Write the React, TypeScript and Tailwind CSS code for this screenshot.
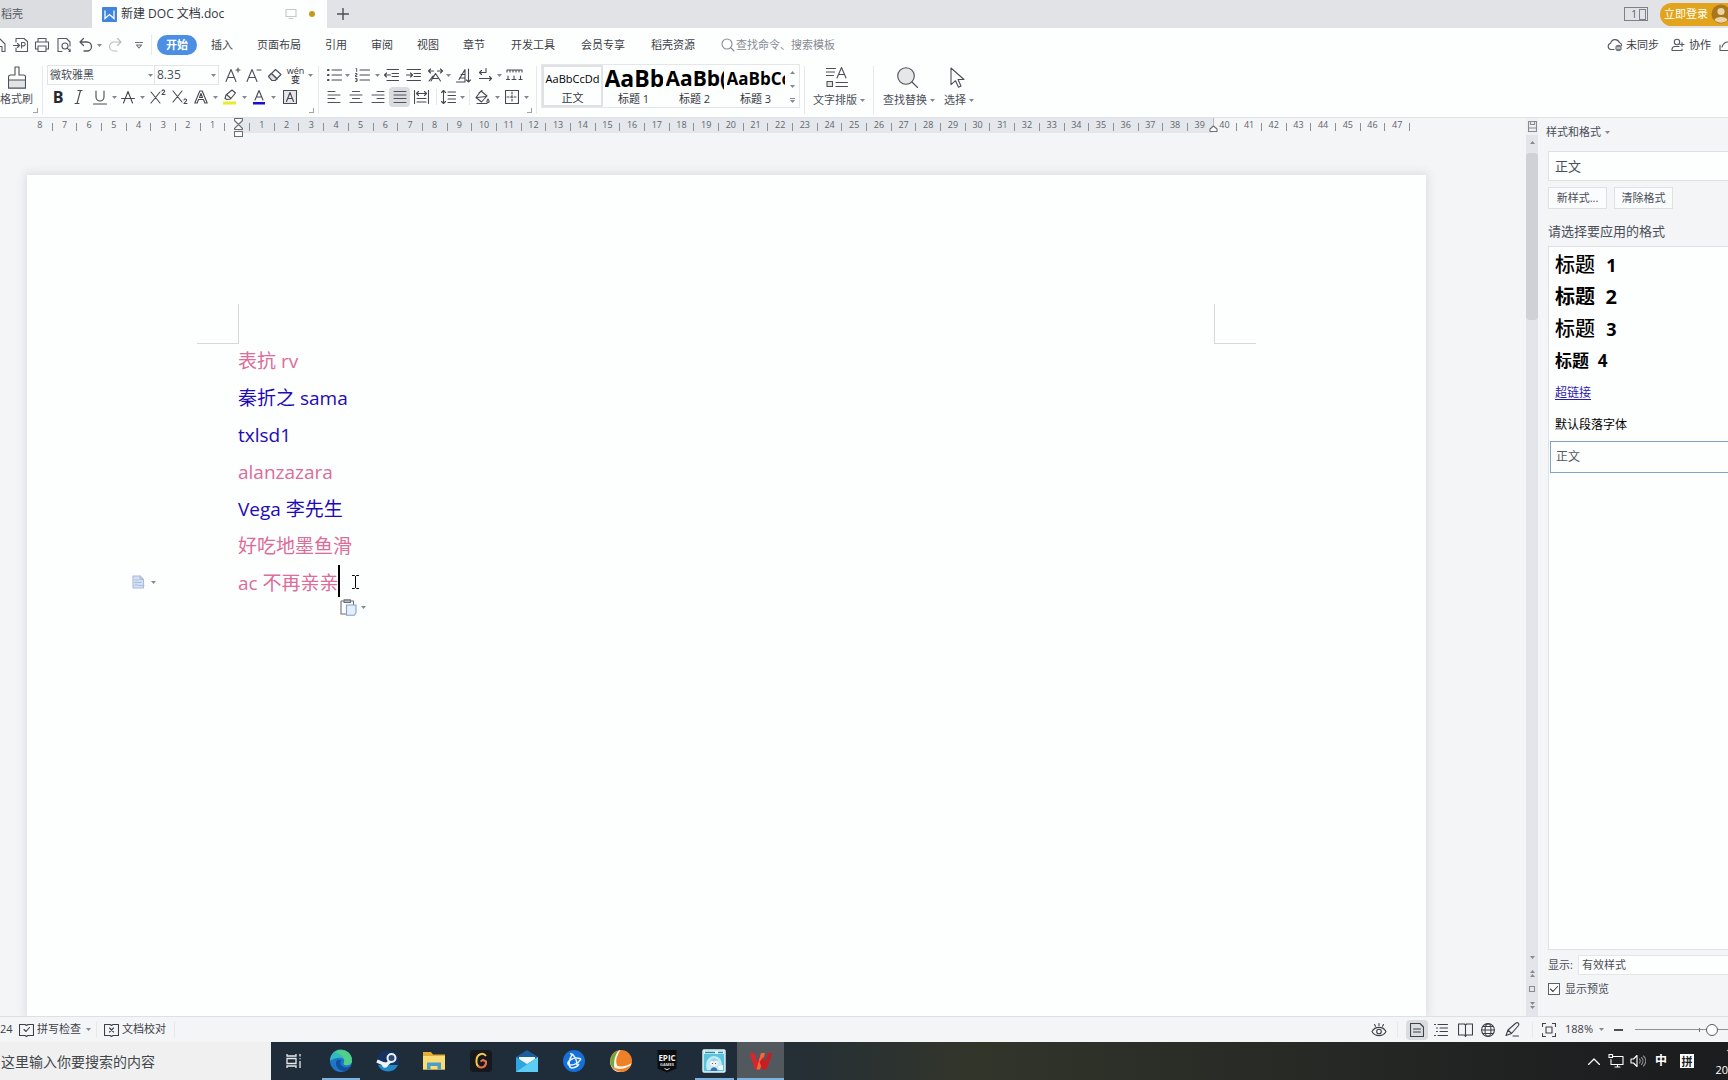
import type { ReactNode } from "react";

const lines = [
  { text: "表抗 rv", color: "text-[#dc6c98]" },
  { text: "秦折之 sama", color: "text-[#1f0bb4]" },
  { text: "txlsd1", color: "text-[#1f0bb4]" },
  { text: "alanzazara", color: "text-[#dc6c98]" },
  { text: "Vega 李先生", color: "text-[#1f0bb4]" },
  { text: "好吃地墨鱼滑", color: "text-[#dc6c98]" },
];

const mainTabs = ["插入", "页面布局", "引用", "审阅", "视图", "章节"];
const extraTabs = ["开发工具", "会员专享", "稻壳资源"];

const rulerMarks = Array.from({ length: 56 }, (_, i) => i - 8);

const gallery = [
  { name: "标题 1", sample: "AaBb", size: "text-[23px]" },
  { name: "标题 2", sample: "AaBb(", size: "text-[21px]" },
  { name: "标题 3", sample: "AaBbCc", size: "text-[17px]" },
];

function Svg({ w = 16, h = 16, className = "", children }: { w?: number; h?: number; className?: string; children: ReactNode }) {
  return (
    <svg
      width={w}
      height={h}
      viewBox={`0 0 ${w} ${h}`}
      className={`shrink-0 ${className}`}
      fill="none"
      stroke="currentColor"
      strokeWidth="1.1"
      strokeLinecap="round"
      strokeLinejoin="round"
      aria-hidden="true"
    >
      {children}
    </svg>
  );
}

function Caret({ up = false }: { up?: boolean }) {
  return (
    <svg width="5" height="3" viewBox="0 0 5 3" className="shrink-0 text-[#858890]" aria-hidden="true">
      <path d={up ? "M0 3L2.5 0L5 3z" : "M0 0h5L2.5 3z"} fill="currentColor" />
    </svg>
  );
}

function Tool({ label, w, children, active = false }: { label: string; w: string; children: ReactNode; active?: boolean }) {
  return (
    <button aria-label={label} className={`h-5 ${w} shrink-0 flex items-center justify-center ${active ? "bg-[#d9dde0] rounded-sm" : ""}`}>
      {children}
    </button>
  );
}

function DropCaret({ w = "w-2" }: { w?: string }) {
  return (
    <button aria-label="更多" className={`h-5 ${w} shrink-0 flex items-center justify-center`}>
      <Caret />
    </button>
  );
}

function Divider({ className = "h-10" }: { className?: string }) {
  return <div className={`w-px shrink-0 bg-[#e6e8ea] ${className}`} />;
}

function Corner() {
  return (
    <Svg w={5} h={5} className="absolute right-1 bottom-1 text-[#a0a3a8]">
      <path d="M4.500 0v4.500h-4.500" />
    </Svg>
  );
}

function TitleBar() {
  return (
    <header className="h-7 shrink-0 flex items-center bg-[#e1e3e6] text-[#33363d]">
      <button className="w-[92px] h-full shrink-0 bg-[#dbdde0] text-left text-[11px] text-[#555a64] pl-px">稻壳</button>
      <div className="w-[235px] h-full shrink-0 bg-[#fdfefe] flex items-center pl-[10px] pr-3">
        <svg width="15" height="15" viewBox="0 0 15 15" aria-hidden="true">
          <rect width="15" height="15" rx="1" fill="#3f84dd" />
          <path d="M3 3.500v8l4.500-4l4.500 4v-8" fill="none" stroke="#fff" strokeWidth="1.300" />
        </svg>
        <span className="text-[12px] ml-1 flex-1 whitespace-nowrap">新建 DOC 文档.doc</span>
        <Svg w={12} h={12} className="text-[#c4c8cc] mr-3">
          <path d="M1 1.500h10v7h-10zM4 10.500h4" />
        </Svg>
        <span className="size-[6px] rounded-full bg-[#c79a1c]" />
      </div>
      <button aria-label="新建标签" className="size-8 flex items-center justify-center">
        <Svg w={12} h={12} className="text-[#4b4e56]">
          <path d="M6 0.500v11M0.500 6h11" strokeWidth="1.400" />
        </Svg>
      </button>
      <div className="ml-auto flex items-center gap-3 shrink-0">
        <button aria-label="多窗口" className="h-[14px] w-6 border border-[#7d8188] flex items-center justify-end gap-[2px] pr-px text-[10px] leading-none text-[#555a64]">
          1<span className="w-[7px] h-[11px] border border-[#7d8188]" />
        </button>
        <button className="h-[23px] w-[68px] rounded-l-full bg-[#e2a41c] text-white text-[11px] flex items-center pl-1 gap-[3px] overflow-hidden whitespace-nowrap">
          立即登录
          <svg width="20" height="20" viewBox="0 0 20 20" className="shrink-0" aria-hidden="true">
            <circle cx="10" cy="10" r="9.500" fill="#a9761b" />
            <circle cx="10" cy="7.500" r="3.600" fill="#ead3a4" />
            <path d="M3.500 16c1-4 12-4 13 0c-3 3.500-10 3.500-13 0z" fill="#ead3a4" />
          </svg>
        </button>
      </div>
    </header>
  );
}

function MenuBar() {
  return (
    <nav className="h-[34px] shrink-0 flex items-center text-[11px] text-[#3c4048] whitespace-nowrap">
      <Tool label="主页" w="w-[10px]">
        <Svg w={10} className="text-[#555962]">
          <path d="M-5 7l5-5l5 5v7.500h-3v-5h-4" />
        </Svg>
      </Tool>
      <Tool label="输出为PDF" w="w-[22px]">
        <Svg className="text-[#555962]">
          <path d="M3 5v-3.500h8l3.500 3v10h-11.500v-3.500M0.500 8.500h6M4.500 6.500l2 2l-2 2M8.500 11v-5.500h2a1.600 1.600 0 0 1 0 3.400h-2" />
        </Svg>
      </Tool>
      <Tool label="打印" w="w-5">
        <Svg className="text-[#555962]">
          <path d="M4 5v-3.500h8v3.500M4 12h-2.500v-7h13v7h-2.500M4 9h8v5.500h-8z" />
        </Svg>
      </Tool>
      <Tool label="打印预览" w="w-6">
        <Svg className="text-[#555962]">
          <path d="M6 14.500h-4v-13h8.500l3.500 3.500v4M14 12v2.500h-1" />
          <circle cx="9" cy="9" r="3" />
          <path d="M11.200 11.200l3 3" />
        </Svg>
      </Tool>
      <Tool label="撤销" w="w-5">
        <Svg className="text-[#555962]">
          <path d="M5.500 1.500l-3.500 3.500l3.500 3.500M2 5h7a4.500 4.500 0 0 1 0 9h-3" strokeWidth="1.300" />
        </Svg>
      </Tool>
      <DropCaret w="w-[7px]" />
      <Tool label="恢复" w="w-6">
        <Svg className="text-[#b8bbc0]">
          <path d="M10.500 1.500l3.500 3.500l-3.500 3.500M14 5h-7a4.500 4.500 0 0 0 0 9h3" />
        </Svg>
      </Tool>
      <Tool label="自定义快速访问" w="w-6">
        <Svg w={8} h={7} className="text-[#6c7078]">
          <path d="M0.500 0.500h7M1.500 3l2.500 3l2.500-3z" />
        </Svg>
      </Tool>
      <Divider className="h-5 mr-[5px]" />
      <button className="h-5 w-10 rounded-full bg-[#4a8fe3] text-white font-bold shrink-0">开始</button>
      <div className="flex gap-6 ml-[14px]">
        {mainTabs.map((t) => (
          <button key={t}>{t}</button>
        ))}
      </div>
      <div className="flex gap-[26px] ml-[26px]">
        {extraTabs.map((t) => (
          <button key={t}>{t}</button>
        ))}
      </div>
      <label className="flex items-center ml-[26px] text-[#878b94]">
        <Svg w={14} h={14}>
          <circle cx="6" cy="6" r="5" />
          <path d="M9.500 9.500l3.500 3.500" />
        </Svg>
        <input placeholder="查找命令、搜索模板" className="w-40 ml-px outline-none placeholder:text-[#878b94]" />
      </label>
      <div className="ml-auto flex items-center shrink-0">
        <button className="flex items-center gap-[3px]">
          <Svg className="text-[#555962]">
            <path d="M7 12.500h-3a3.200 3.200 0 0 1-0.300-6.300a4.500 4.500 0 0 1 8.600-0.700a3.300 3.300 0 0 1 2.400 3" />
            <circle cx="11.500" cy="11" r="3.200" fill="#777b84" stroke="none" />
            <path d="M10 11h3" stroke="#fff" />
          </Svg>
          未同步
        </button>
        <button className="flex items-center gap-1 ml-3">
          <Svg w={14} h={14} className="text-[#555962]">
            <circle cx="6" cy="4" r="2.700" />
            <path d="M8 8.500h-4a3 3 0 0 0-3 3v1h10v-1.500M11 4.500v4M9 6.500h4" />
          </Svg>
          协作
        </button>
        <button aria-label="分享" className="ml-2">
          <Svg w={9} h={14} className="text-[#555962]">
            <path d="M1 7v5.500h8M3 9c1-3 3-5 6-5" />
          </Svg>
        </button>
      </div>
    </nav>
  );
}

function AlignLines({ d }: { d: string }) {
  return (
    <Svg w={14} h={14} className="text-[#50545c]">
      <path d={d} />
    </Svg>
  );
}

function FontGroup() {
  return (
    <div className="relative w-[275px] shrink-0 h-full pl-1 pt-[3px]">
      <div className="flex items-center">
        <div className="flex w-[172px] h-[20px] border border-[#e2e4e6] text-[11px] items-center mr-[3px]">
          <input aria-label="字体" defaultValue="微软雅黑" className="w-[98px] pl-[2px] outline-none" />
          <DropCaret />
          <div className="w-px h-full bg-[#e2e4e6]" />
          <input aria-label="字号" defaultValue="8.35" className="w-[54px] pl-[2px] outline-none text-[12px]" />
          <DropCaret />
        </div>
        <Tool label="增大字号" w="w-[21px]">
          <Svg>
            <path d="M1 14.500l5-12l5 12M2.700 10.500h6.600M13 1v4M11 3h4" />
          </Svg>
        </Tool>
        <Tool label="减小字号" w="w-[21px]">
          <Svg>
            <path d="M1 14.500l5-12l5 12M2.700 10.500h6.600M11 3h4" />
          </Svg>
        </Tool>
        <Tool label="清除格式" w="w-[21px]">
          <Svg>
            <path d="M1.500 9.500l7-7l5.500 5l-6 6h-3zM4.500 6.500l5.500 5.500" />
            <path d="M1.500 9.500l3-3l5.500 5.500l-2 1.500h-3z" fill="#dcdee0" />
          </Svg>
        </Tool>
        <Tool label="拼音指南" w="w-[21px]">
          <span className="flex flex-col items-center text-[9px] leading-[9px] font-medium text-[#33363d]">
            <span>wén</span>
            <span>变</span>
          </span>
        </Tool>
        <DropCaret />
      </div>
      <div className="flex items-center mt-[2px] text-[#454951]">
        <Tool label="加粗" w="w-[22px]">
          <b className="text-[16px] text-[#26292f]">B</b>
        </Tool>
        <Tool label="倾斜" w="w-5">
          <Svg w={10} h={14}>
            <path d="M4 0.500h4M1 13.500h4M6.500 0.500l-3.500 13" />
          </Svg>
        </Tool>
        <Tool label="下划线" w="w-[22px]">
          <Svg w={14} h={15}>
            <path d="M3 1v6a4 4 0 0 0 8 0v-6M0.500 14h13" />
          </Svg>
        </Tool>
        <DropCaret w="w-[6px]" />
        <Tool label="删除线" w="w-[22px]">
          <Svg w={14} h={15}>
            <path d="M2.500 13l4.500-11.500l4.500 11.500M0.500 8.500h13" />
          </Svg>
        </Tool>
        <DropCaret w="w-[6px]" />
        <Tool label="上标" w="w-[26px]">
          <Svg>
            <path d="M1 3l9 11M10 3l-9 11M12 2a1.300 1.300 0 0 1 2.600 0.500l-2.600 3h3" />
          </Svg>
        </Tool>
        <Tool label="下标" w="w-[18px]">
          <Svg>
            <path d="M1 2l9 11M10 2l-9 11M12 11a1.300 1.300 0 0 1 2.600 0.500l-2.600 3h3" />
          </Svg>
        </Tool>
        <Tool label="文字效果" w="w-6">
          <Svg w={14} h={14}>
            <path d="M0.800 13l5-12h2.400l5 12h-2.400l-1.300-3.500h-5l-1.300 3.500zM5.500 7.500l1.500-4l1.500 4z" />
          </Svg>
        </Tool>
        <DropCaret w="w-[5px]" />
        <Tool label="突出显示" w="w-6">
          <Svg>
            <path d="M3 9.500l1-3.500l6-5l3.500 3l-5 6l-3.500 0.500zM5 6l4 3.500" />
            <rect x="1" y="12.500" width="13" height="3" fill="#e9ec2c" stroke="none" />
          </Svg>
        </Tool>
        <DropCaret w="w-[5px]" />
        <Tool label="字体颜色" w="w-6">
          <Svg w={14}>
            <path d="M3 11l4-9.500l4 9.500M4.200 8h5.600" />
            <rect x="1" y="13" width="12" height="2.500" fill="#1f0bd0" stroke="none" />
          </Svg>
        </Tool>
        <DropCaret w="w-[5px]" />
        <Tool label="字符底纹" w="w-7">
          <Svg w={14} h={14}>
            <path d="M0.500 0.500h13v13h-13z" fill="#e6e7e8" />
            <path d="M3.500 11.500l3.500-9l3.500 9M4.700 8.500h4.600" />
          </Svg>
        </Tool>
      </div>
      <Corner />
    </div>
  );
}

function ParagraphGroup() {
  return (
    <div className="relative w-[217px] shrink-0 h-full pl-1 pt-[3px] text-[#454951]">
      <div className="flex items-center">
        <Tool label="项目符号" w="w-[22px]">
          <Svg w={15} h={14}>
            <path d="M5 2h9.500M5 7h9.500M5 12h9.500" />
            <path d="M1 2h0.500M1 7h0.500M1 12h0.500" strokeWidth="2.200" />
          </Svg>
        </Tool>
        <DropCaret w="w-[5px]" />
        <Tool label="编号" w="w-6">
          <Svg w={15} h={14}>
            <path d="M5 2h9.500M5 7h9.500M5 12h9.500" />
            <path d="M1 0.500h0.700v3M0.500 5.500h1.500v1.500h-1.500v1.500h1.500M0.500 10.500h1.500v3h-1.500M1 12h1" strokeWidth="0.900" />
          </Svg>
        </Tool>
        <DropCaret w="w-[6px]" />
        <Tool label="减少缩进" w="w-[22px]">
          <Svg w={15} h={14}>
            <path d="M3 1.500h11.500M8 5.500h6.500M8 8.500h6.500M3 12.500h11.500M0.500 7h6M2.500 5l-2 2l2 2" />
          </Svg>
        </Tool>
        <Tool label="增加缩进" w="w-[22px]">
          <Svg w={15} h={14}>
            <path d="M1 1.500h13.500M8 5.500h6.500M8 8.500h6.500M1 12.500h13.500M0.500 7h6M4.500 5l2 2l-2 2" />
          </Svg>
        </Tool>
        <Tool label="中文版式" w="w-[22px]">
          <Svg w={15} h={14}>
            <path d="M1 13l4-5M0.500 3h5M2.500 1l-2 2l2 2M14.500 3h-5M12.500 1l2 2l-2 2M3 13l4.500-7.500l5 7.500M5 10.500h5" />
          </Svg>
        </Tool>
        <DropCaret w="w-[5px]" />
        <Tool label="排序" w="w-6">
          <Svg w={15} h={15}>
            <path d="M0.500 14h8.500v-12.500l-6 10M5 6.500h4M3.500 10h5.500M12.500 1v13M10.500 12l2 2l2-2" />
          </Svg>
        </Tool>
        <Tool label="显示段落标记" w="w-[22px]">
          <Svg w={14} h={14}>
            <path d="M7 0.500v4h-6.500M2.500 2.500l-2 2l2 2M0.500 10.500h12M10.500 8.500l2 2l-2 2" />
          </Svg>
        </Tool>
        <DropCaret w="w-[5px]" />
        <Tool label="制表位" w="w-6">
          <Svg w={17} h={12}>
            <path d="M1 3v-2h15v2M4 1v2M7 1v2M10 1v2M13 1v2M0.500 10.500h3M6 10.500h4M13 10.500h3M2 7v3.500M8 7v3.500M14.500 7v3.500" />
          </Svg>
        </Tool>
      </div>
      <div className="flex items-center mt-[2px]">
        <Tool label="左对齐" w="w-[22px]">
          <AlignLines d="M1 1.500h7M1 5h12M1 8.500h7M1 12.500h12" />
        </Tool>
        <Tool label="居中" w="w-[22px]">
          <AlignLines d="M3.500 1.500h7M1 5h12M3.500 8.500h7M1 12.500h12" />
        </Tool>
        <Tool label="右对齐" w="w-[22px]">
          <AlignLines d="M6 1.500h7M1 5h12M6 8.500h7M1 12.500h12" />
        </Tool>
        <Tool label="两端对齐" w="w-[21px]" active>
          <AlignLines d="M1 1.500h12M1 5h12M1 8.500h12M1 12.500h12" />
        </Tool>
        <Tool label="分散对齐" w="w-[22px]">
          <Svg w={15} h={14}>
            <path d="M0.500 0.500v13M14.500 0.500v13M3 3.500h9M4.500 1.500l-2 2l2 2M10.500 1.500l2 2l-2 2M3 8.500h9M3 12h9" />
          </Svg>
        </Tool>
        <Divider className="h-4 ml-1" />
        <Tool label="行距" w="w-[22px]">
          <Svg w={15} h={14}>
            <path d="M2.500 0.500v13M0.500 2.500l2-2l2 2M0.500 11.500l2 2l2-2M7 2h7.500M7 5.500h7.500M7 9h7.500M7 12.500h7.500" />
          </Svg>
        </Tool>
        <DropCaret w="w-[6px]" />
        <Divider className="h-4 ml-1" />
        <Tool label="底纹" w="w-6">
          <Svg w={15} h={14}>
            <path d="M6 1l6 5l-5.500 6l-5.500-4.500zM4 3l3-2.500M2 7.500l9-1" />
            <path d="M13 9c1.500 2 1.500 3.500 0 3.500s-1.500-1.500 0-3.500M2 13.500h10" />
          </Svg>
        </Tool>
        <DropCaret w="w-[6px]" />
        <Tool label="边框" w="w-6">
          <Svg w={14} h={14}>
            <path d="M0.500 0.500h13v13h-13z" />
            <path d="M7 2v10M2 7h10" strokeDasharray="2 1.500" />
          </Svg>
        </Tool>
        <DropCaret w="w-[5px]" />
      </div>
      <Corner />
    </div>
  );
}

function StyleGallery() {
  return (
    <div className="flex shrink-0 w-[259px] h-11 mt-[2px] ml-1 border border-[#e4e6e8] text-[11px] text-[#33363d]">
      <button className="w-[61px] h-full border-2 border-[#dfe1e4] flex flex-col items-center justify-between pt-[3px] overflow-hidden">
        <span className="h-[18px] leading-[18px] text-black">AaBbCcDd</span>
        <span className="leading-[15px]">正文</span>
      </button>
      {gallery.map((g) => (
        <button key={g.name} className="w-[61px] h-full flex flex-col items-center justify-between pt-px pb-[2px] whitespace-nowrap">
          <span className={`w-[58px] h-[25px] leading-[25px] overflow-hidden text-left font-bold text-black ${g.size}`}>{g.sample}</span>
          <span className="leading-[13px]">{g.name}</span>
        </button>
      ))}
      <div className="flex flex-col flex-1">
        <button aria-label="上一行" className="flex-1 flex items-center justify-center">
          <Caret up />
        </button>
        <button aria-label="下一行" className="flex-1 flex items-center justify-center">
          <Caret />
        </button>
        <button aria-label="更多样式" className="flex-1 flex flex-col gap-px items-center justify-center">
          <span className="w-[5px] h-px bg-[#858890]" />
          <Caret />
        </button>
      </div>
    </div>
  );
}

function BigTool({ label, w, children }: { label: string; w: string; children: ReactNode }) {
  return (
    <button className={`${w} shrink-0 h-[46px] pt-[5px] flex flex-col items-center justify-between text-[11px] leading-[16px] whitespace-nowrap`}>
      <span className="pr-1">{children}</span>
      <span className="flex items-center gap-[3px]">
        {label}
        <Caret />
      </span>
    </button>
  );
}

function Ribbon() {
  return (
    <div className="h-14 shrink-0 flex border-b border-[#e0e3e6] text-[#4b4f58]">
      <div className="relative w-[42px] shrink-0 pt-1">
        <button className="w-[33px] flex flex-col items-end text-[11px] leading-[16px] whitespace-nowrap">
          <Svg w={18} h={23} className="mr-[7px] mb-[2px]">
            <path d="M7 1h4v8h4.500a2 2 0 0 1 2 2v11h-17v-11a2 2 0 0 1 2-2h4.500z" />
            <path d="M0.500 14h17v8h-17z" fill="#e2e3e5" />
          </Svg>
          格式刷
        </button>
        <Corner />
      </div>
      <Divider className="h-12 mt-1" />
      <FontGroup />
      <Divider className="h-12 mt-1" />
      <ParagraphGroup />
      <Divider className="h-12 mt-1" />
      <StyleGallery />
      <Divider className="h-12 mt-1 ml-1" />
      <BigTool label="文字排版" w="w-[68px]">
        <Svg w={22} h={21}>
          <path d="M0.500 1.500h9M0.500 5h8M0.500 8.500h7M11 11l4.500-10.500l4.500 10.500M12.500 7.500h6M10 15.500h11.500M10 19.500h11.500" />
          <path d="M1 14.500h5.500v5h-5.500z" fill="#e2e3e5" />
        </Svg>
      </BigTool>
      <Divider className="h-12 mt-1" />
      <BigTool label="查找替换" w="w-[70px]">
        <Svg w={21} h={21}>
          <circle cx="9" cy="9" r="8.300" fill="#e6e7e9" />
          <path d="M15 15l5.500 5.500" />
        </Svg>
      </BigTool>
      <BigTool label="选择" w="w-[30px]">
        <Svg w={15} h={21}>
          <path d="M1 1l13 11.500h-6l3 6.500l-2.500 1.200l-3-6.500l-4.500 4z" />
        </Svg>
      </BigTool>
    </div>
  );
}

function Ruler() {
  return (
    <div className="relative h-4 shrink-0 pl-7 text-[9px] leading-[13px] text-[#60646c]">
      <div className="grid w-[1382px] h-[15px] grid-cols-[repeat(56,minmax(0,1fr))]">
        {rulerMarks.map((n) => (
          <span
            key={n}
            className={`flex items-start justify-center ${n > 0 && n < 40 ? "bg-[#e4e7eb]" : ""} ${n === 0 ? "bg-linear-to-r from-transparent from-50% to-[#e4e7eb] to-50%" : ""}`}
          >
            <span className="flex-1 text-center">{n === 0 ? "" : Math.abs(n)}</span>
            <span className={`w-px h-2 mt-[5px] ${n === 39 ? "" : "bg-[#8d9097]"}`} />
          </span>
        ))}
      </div>
      <Svg w={9} h={19} className="absolute left-[234px] top-0 text-[#6a6d74]">
        <path d="M0.500 0.500h8v2l-4 4l-4-4zM4.500 6.500l4 4v1h-8v-1zM0.500 13.500h8v5h-8z" fill="#fff" />
      </Svg>
      <Svg w={9} h={14} className="absolute left-[1209px] top-0 text-[#6a6d74]">
        <path d="M4.500 0v8" stroke="#b9bcc2" />
        <path d="M4.500 8l3.500 3v2.500h-7v-2.500z" fill="#fff" />
      </Svg>
    </div>
  );
}

function DocPage() {
  return (
    <div className="ml-[27px] mt-[41px] w-[1399px] flex-1 bg-[#fdfefe] shadow-[0_0_9px_2px_#dcdee2] pt-[129px]">
      <div className="flex justify-between px-[170px]">
        <div className="w-[42px] h-10 border-r border-b border-[#d6d9dc]" />
        <div className="w-[42px] h-10 border-l border-b border-[#d6d9dc]" />
      </div>
      <div className="-mt-px pl-[211px] text-[19px] leading-[37px]">
        {lines.map((l) => (
          <p key={l.text} className={l.color}>
            {l.text}
          </p>
        ))}
        <p className="relative w-fit text-[#dc6c98]">
          ac 不再亲亲
          <span className="absolute -right-px top-0 w-[2px] h-8 bg-black" />
          <Svg w={7} h={14} className="absolute -right-5 top-[10px] text-black">
            <path d="M0.500 0.500h2l1 1l1-1h2M3.500 1.500v11M0.500 13.500h2l1-1l1 1h2" strokeWidth="1" />
          </Svg>
          <button aria-label="粘贴选项" className="absolute left-[102px] top-[34px] flex items-center gap-1 w-8">
            <Svg w={17} h={17} className="text-[#6d7078]">
              <path d="M6 15h-5v-13h12.500v4M4 0.800h6.500v2.700h-6.500z" fill="#fff" />
              <path d="M6.500 6h9.500v8l-2 2.300h-7.500z" fill="#e4effb" stroke="#7fa2cb" />
            </Svg>
            <Caret />
          </button>
          <button aria-label="页面选项" className="absolute -left-[106px] top-[10px] flex items-center gap-[6px]">
            <Svg w={13} h={14} className="text-[#a9bddb]">
              <path d="M1 1h7l3.500 3.500v8.500h-10.500z" fill="#d3e0f3" />
              <path d="M8 1v3.500h3.500M3 5h3M3 7.500h6M3 10h3M7 10.500h5" />
            </Svg>
            <Caret />
          </button>
        </p>
      </div>
    </div>
  );
}

function ScrollBar() {
  return (
    <div className="w-3 shrink-0 bg-[#e4e5ea] flex flex-col items-center text-[#868a92]">
      <button aria-label="标尺" className="h-[17px] w-full bg-[#eef0f2] flex justify-center items-center">
        <Svg w={9} h={11}>
          <path d="M0.500 0.500h8v10h-8zM0.500 7h8M2.500 0.500v3h4v-3" />
        </Svg>
      </button>
      <button aria-label="向上滚动" className="h-[14px] flex items-center">
        <Caret up />
      </button>
      <div className="w-full h-[167px] mt-1 bg-[#cfd1d7] rounded-sm" />
      <button aria-label="向下滚动" className="mt-auto h-4 flex items-center">
        <Caret />
      </button>
      <button aria-label="上一页" className="h-4 flex flex-col justify-center gap-px">
        <Caret up />
        <Caret up />
      </button>
      <button aria-label="选择浏览对象" className="size-[6px] my-[5px] border border-[#868a92]" />
      <button aria-label="下一页" className="h-4 mb-[3px] flex flex-col justify-center gap-px">
        <Caret />
        <Caret />
      </button>
    </div>
  );
}

function StylePanel() {
  return (
    <aside className="w-[190px] shrink-0 pl-[10px] flex flex-col bg-[#f4f5f7] text-[11px] text-[#4a4e57] whitespace-nowrap overflow-hidden">
      <button className="h-7 shrink-0 flex items-center gap-1 -ml-[2px]">
        样式和格式
        <Caret />
      </button>
      <input aria-label="当前样式" defaultValue="正文" className="mt-[5px] h-[30px] shrink-0 border border-r-0 border-[#dfe2e5] bg-[#fdfefe] pl-[6px] pb-[2px] text-[13px] outline-none" />
      <div className="flex gap-[7px] mt-[6px] shrink-0">
        <button className="w-[59px] h-[22px] border border-[#dfe2e5] bg-[#fbfcfd]">新样式...</button>
        <button className="w-[59px] h-[22px] border border-[#dfe2e5] bg-[#fbfcfd]">清除格式</button>
      </div>
      <h2 className="text-[13px] leading-5 mt-[12px] shrink-0">请选择要应用的格式</h2>
      <div className="mt-[5px] flex-1 border border-r-0 border-[#dfe2e5] bg-[#fdfefe] flex flex-col items-stretch text-black text-left">
        <button className="h-8 mt-[2px] pl-[6px] text-left text-[20px] font-medium">
          标题 <b className="ml-[6px] text-[18px]">1</b>
        </button>
        <button className="h-8 pl-[6px] text-left text-[20px] font-bold">标题&nbsp; 2</button>
        <button className="h-8 pl-[6px] text-left text-[20px] font-medium">
          标题 <b className="ml-[6px] text-[18px]">3</b>
        </button>
        <button className="h-8 pl-[6px] text-left text-[17px] font-bold">标题&nbsp; 4</button>
        <a href="#" className="h-8 pl-[6px] text-[12px] leading-8 text-[#2a1bb0] underline underline-offset-2">
          超链接
        </a>
        <button className="h-8 pl-[6px] text-left text-[12px]">默认段落字体</button>
        <button className="h-8 ml-px pl-[5px] text-left text-[12px] text-[#55585e] border border-r-0 border-[#83a2c4]">正文</button>
      </div>
      <label className="mt-[5px] h-5 shrink-0 flex items-center">
        显示:
        <select className="appearance-none ml-auto w-[150px] h-5 pl-[3px] border border-r-0 border-[#e4e7e9] bg-[#fdfefe]">
          <option>有效样式</option>
        </select>
      </label>
      <label className="mt-1 mb-[17px] h-5 shrink-0 flex items-center gap-[5px]">
        <span className="relative flex">
          <input type="checkbox" defaultChecked className="appearance-none size-3 border border-[#5a5e66] bg-white" />
          <Svg w={12} h={12} className="absolute inset-0 pointer-events-none text-[#3c4048]">
            <path d="M2.500 6l2.500 2.500l4.500-5" />
          </Svg>
        </span>
        显示预览
      </label>
    </aside>
  );
}

function StatusBar() {
  return (
    <footer className="h-[26px] shrink-0 flex items-center border-t border-[#dee0e4] bg-[#f4f5f7] text-[11px] text-[#3c4048] whitespace-nowrap">
      <span className="w-[19px] text-[11px]">24</span>
      <button className="flex items-center gap-[3px]">
        <Svg w={15} h={14}>
          <path d="M0.500 1.500h5.500l1.500 1l1.500-1h5.500v11h-5.500l-1.500 1l-1.500-1h-5.500zM5 6.500l2 2l3.500-4" />
        </Svg>
        拼写检查
      </button>
      <DropCaret w="w-[15px]" />
      <Divider className="h-4 mr-[7px]" />
      <button className="flex items-center gap-[3px] mr-2">
        <Svg w={15} h={14}>
          <path d="M0.500 1.500h5.500l1.500 1l1.500-1h5.500v11h-5.500l-1.500 1l-1.500-1h-5.500zM5.500 5l4 4M9.500 5l-4 4" />
        </Svg>
        文档校对
      </button>
      <Divider className="h-4" />
      <div className="ml-auto flex items-center shrink-0">
        <Tool label="护眼模式" w="w-9">
          <Svg>
            <path d="M1 9.500c3-5.500 11-5.500 14 0c-3 5.500-11 5.500-14 0zM8 1.500v2M3.500 2.500l1 1.800M12.500 2.500l-1 1.800" />
            <circle cx="8" cy="9.500" r="2.300" />
          </Svg>
        </Tool>
        <Divider className="h-4 mr-2" />
        <Tool label="页面视图" w="w-[22px]" active>
          <Svg w={14} h={14}>
            <path d="M0.500 0.500h9.500l3.500 3.500v9.500h-13zM3.500 6h7M3.500 9h7" />
          </Svg>
        </Tool>
        <Tool label="大纲" w="w-[26px]">
          <Svg w={14} h={14}>
            <path d="M0.500 1.500h1M4 1.500h9.500M2.500 5h1M6 5h7.500M2.500 8.500h1M6 8.500h7.500M0.500 12.500h1M4 12.500h9.500" />
          </Svg>
        </Tool>
        <Tool label="阅读版式" w="w-[22px]">
          <Svg w={15} h={14}>
            <path d="M0.500 1h6l1 1l1-1h6v11h-6l-1 1.500l-1-1.500h-6zM7.500 2v11" />
          </Svg>
        </Tool>
        <Tool label="Web版式" w="w-6">
          <Svg w={14} h={14}>
            <circle cx="7" cy="7" r="6.400" />
            <path d="M0.600 7h12.800M2 3.500h10M2 10.500h10" />
            <ellipse cx="7" cy="7" rx="3" ry="6.400" />
          </Svg>
        </Tool>
        <Tool label="写作模式" w="w-6">
          <Svg w={15} h={15}>
            <path d="M1 13.500l2-5.500l8-7c2-1 3.500 0.500 2.500 2.500l-7 8zM3 8l3.500 3.500M8 14h5.500" />
          </Svg>
        </Tool>
        <Divider className="h-4 ml-2" />
        <Tool label="适合页面" w="w-8">
          <Svg w={14} h={14}>
            <path d="M0.500 3.500v-3h3M10.500 0.500h3v3M13.500 10.500v3h-3M3.500 13.500h-3v-3M4 4h6v6h-6z" />
          </Svg>
        </Tool>
        <span>188%</span>
        <DropCaret w="w-4" />
        <Tool label="缩小" w="w-[18px]">
          <span className="w-[9px] h-[2px] bg-[#4b4e55]" />
        </Tool>
        <div className="relative w-[93px] ml-2 h-5 flex items-center">
          <span className="absolute left-16 w-px h-1 bg-[#70747c]" />
          <input
            type="range"
            aria-label="显示比例"
            defaultValue="88"
            className="appearance-none w-full h-px bg-[#8c9098] [&::-webkit-slider-thumb]:appearance-none [&::-webkit-slider-thumb]:size-3 [&::-webkit-slider-thumb]:rounded-full [&::-webkit-slider-thumb]:border [&::-webkit-slider-thumb]:border-[#555962] [&::-webkit-slider-thumb]:bg-white"
          />
        </div>
      </div>
    </footer>
  );
}

function AppIcon({ children }: { children: ReactNode }) {
  return (
    <svg width="24" height="24" viewBox="0 0 24 24" fill="none" aria-hidden="true">
      {children}
    </svg>
  );
}

const apps: { name: string; bar?: string; bg?: string; icon: ReactNode }[] = [
  {
    name: "任务视图",
    icon: (
      <path d="M5 5v2h9v-2M5 19v-2h9v2M5 9.500h9v5h-9zM18 5v2.500M18 12v7M18 9.200v1" stroke="#e8eaec" strokeWidth="1.300" />
    ),
  },
  {
    name: "Edge",
    bar: "w-[38px]",
    icon: (
      <>
        <circle cx="12" cy="12" r="11" fill="#1d77c9" />
        <path d="M1 12a11 11 0 0 1 22-1c0.200 4-3 5.500-6 5.300c-2.500-0.100-2.800-1.500-2-2.500c1.500-2.500-0.500-5-4-5c-4 0-8 1.500-10 3.200z" fill="#35b8c0" />
        <path d="M12 1a11 11 0 0 1 11 10c0.200 4-3 5.500-6 5.300c-2.500-0.100-2.800-1.500-2-2.500c2-6-4-9-9-10.800a10.500 10.500 0 0 1 6-2z" fill="#5cdb6c" opacity="0.700" />
        <path d="M8 11c-3 5 1 11 8 11.200c3-1 5-3 6-5.200c-5 3-10 1-10.500-2.500c-0.300-1.500 0.500-2.500 1-3.500z" fill="#124f9c" />
      </>
    ),
  },
  {
    name: "Steam",
    icon: (
      <>
        <circle cx="12" cy="12" r="11" fill="#16335f" />
        <path d="M2 16a11 11 0 0 0 20 0z" fill="#2389c4" />
        <path d="M1 12l9 4l5.500-5" stroke="#eef3f8" strokeWidth="3.500" />
        <circle cx="15.500" cy="9" r="4" fill="#2d4c74" stroke="#eef3f8" strokeWidth="2" />
        <circle cx="9" cy="16" r="2.800" fill="#eef3f8" />
      </>
    ),
  },
  {
    name: "文件资源管理器",
    icon: (
      <>
        <path d="M1 3h8l2 2.500h12v15h-22z" fill="#e5ae33" />
        <path d="M1 7h22v13.500h-22z" fill="#fbdb76" />
        <path d="M5 20.500v-7h14v7h-3.500v-3.500h-7v3.500z" fill="#4a9fc4" />
      </>
    ),
  },
  {
    name: "加速器",
    icon: (
      <>
        <rect x="1" y="1" width="22" height="22" rx="4" fill="#17181b" />
        <path d="M17 7c-3-4-9-2-9.500 4c-0.300 3 0.500 5.500 2.500 7" stroke="#f0c94c" strokeWidth="2" />
        <path d="M9 17c4 3.500 8.500 0.500 8-4.500l-3-1.500l-2.500 1.500" stroke="#e8714f" strokeWidth="2" />
      </>
    ),
  },
  {
    name: "邮件",
    icon: (
      <>
        <path d="M1 8l11-7l11 7v6h-22z" fill="#1a5e9e" />
        <path d="M4 8h16v8h-16z" fill="#f2f7fb" />
        <path d="M1 8l11 7l11-7v15h-22z" fill="#2fa5e0" />
        <path d="M1 23l22-15v15z" fill="#5ccdf5" />
      </>
    ),
  },
  {
    name: "战网",
    icon: (
      <>
        <circle cx="12" cy="12" r="11" fill="#1570d8" />
        <path d="M8 5c3-1 7 5 7 11M6 15.500c-1-3 5-8.500 13-5.500M9 19c-3-2-2-9 1-13" stroke="#e6f2ff" strokeWidth="1.500" />
        <path d="M6 15.500c3 1.500 10 0 13-5.500M9 19c3 0 6-1 8-4" stroke="#e6f2ff" strokeWidth="1.500" />
      </>
    ),
  },
  {
    name: "联想",
    icon: (
      <>
        <circle cx="12" cy="12" r="11" fill="#ee8127" />
        <path d="M1.500 15c0-8 5-12 10-14c-5 8-5 12-3 16c4 1 10 0 14-3c-2 7-8 9-12 9s-8-3-9-8z" fill="#fdf5ea" />
        <path d="M2 9a11 11 0 0 0 4 12c-2-5-1-13 3-19a11 11 0 0 0-7 7z" fill="#6cab3f" />
        <path d="M3 17c5 5 14 3 19-1c-3 8-14 10-19 1z" fill="#ee8127" />
      </>
    ),
  },
  {
    name: "Epic Games",
    icon: (
      <>
        <path d="M2.500 1h19v18.500l-9.500 4l-9.500-4z" fill="#0c0d0f" />
        <text x="12" y="11.500" textAnchor="middle" fontSize="8" fontWeight="bold" fill="#f4f4f4">
          EPIC
        </text>
        <text x="12" y="17" textAnchor="middle" fontSize="4" fontWeight="bold" fill="#dcdcdc">
          GAMES
        </text>
        <path d="M9.500 19.500l2.500 1.200l2.500-1.200" stroke="#ddd" />
      </>
    ),
  },
  {
    name: "直播",
    bar: "w-[39px]",
    icon: (
      <>
        <rect x="1" y="1" width="22" height="22" rx="1" fill="#5cc3dc" stroke="#e9f5f9" strokeWidth="1.400" />
        <path d="M2 2h20v3h-20z" fill="#e4f6fa" />
        <path d="M3 3.500h10M16 3.500h5" stroke="#2a8ba8" strokeWidth="1.500" />
        <path d="M5 21c-2-4-1-14 7-14s9 9 7 14z" fill="#bfeaf6" />
        <circle cx="12" cy="13.500" r="4" fill="#fbeee9" />
        <path d="M7.500 13c1-5 8-5 9 0l-2-1.500l-2.500 1l-2.500-1z" fill="#8fd8ee" />
        <path d="M10.500 14v1M13.500 14v1" stroke="#2a6aa8" />
        <path d="M8.500 22c0-5 7-5 7 0z" fill="#3a72b4" />
        <path d="M16 17l5-1v5h-4z" fill="#eef8fc" />
      </>
    ),
  },
  {
    name: "WPS Office",
    bar: "w-full",
    bg: "bg-[#51595f]",
    icon: (
      <>
        <path d="M0.500 4h5l3 9l3.500-9h4l-6 16.500h-4z" fill="#d8262a" />
        <path d="M12 4h4l-5 16.500h-3.500z" fill="#f0683c" />
        <path d="M10.500 13l3 7.500h4l6-16.500h-4.500l-3 9l-1.800-5z" fill="#c91d22" />
      </>
    ),
  },
];

function TaskBar() {
  return (
    <div className="h-[38px] shrink-0 flex items-center text-white bg-linear-to-r from-[#1f2c39] from-42% via-[#32352a] via-56% to-[#1b1d1f] to-96%">
      <input
        aria-label="搜索"
        placeholder="这里输入你要搜索的内容"
        className="w-[271px] h-full shrink-0 bg-[#f0f0f0] pl-px text-[14px] outline-none placeholder:text-[#43464a]"
      />
      <div className="w-[513px] h-full shrink-0 grid grid-cols-11">
        {apps.map((a) => (
          <button key={a.name} aria-label={a.name} className={`relative flex items-center justify-center ${a.bg ?? ""}`}>
            <AppIcon>{a.icon}</AppIcon>
            {a.bar && <span className={`absolute bottom-0 h-[2px] bg-[#7fb3df] ${a.bar}`} />}
          </button>
        ))}
      </div>
      <div className="ml-auto h-full flex items-center shrink-0">
        <Tool label="显示隐藏的图标" w="w-6">
          <Svg w={12} h={7}>
            <path d="M0.500 6.500l5.500-5.500l5.500 5.500" strokeWidth="1.300" />
          </Svg>
        </Tool>
        <Tool label="网络" w="w-5">
          <Svg>
            <path d="M5 3.500h10v8h-12v-5M7 14h5M9.500 11.500v2.500M1 1.500h3.500v3h-3.500z" />
          </Svg>
        </Tool>
        <Tool label="音量" w="w-6">
          <Svg>
            <path d="M1 6h2.500l3.500-3.500v11l-3.500-3.500h-2.500z" />
            <path d="M9.500 6c1 1 1 3 0 4M11.500 4.500c2 2 2 5 0 7M13.500 3c3 3 3 7 0 10" stroke="#8a8c8c" />
          </Svg>
        </Tool>
        <button className="w-[22px] text-[12px] font-bold">中</button>
        <button className="size-[14px] ml-2 bg-white text-[#1b1d1f] text-[11px] leading-[13px] font-bold">拼</button>
        <div className="w-8 ml-[2px] flex flex-col items-end text-[11px] leading-[17px]">
          <span className="-mr-1">1</span>
          <span>20</span>
        </div>
      </div>
    </div>
  );
}

export default function App() {
  return (
    <div className="h-screen w-full flex flex-col overflow-hidden bg-[#fdfefe] font-['Open_Sans','Noto_Sans_CJK_SC',sans-serif]">
      <TitleBar />
      <MenuBar />
      <Ribbon />
      <div className="flex-1 min-h-0 flex bg-[#f4f5f7]">
        <main className="flex-1 min-w-0 flex flex-col overflow-hidden">
          <Ruler />
          <DocPage />
        </main>
        <ScrollBar />
        <StylePanel />
      </div>
      <StatusBar />
      <TaskBar />
    </div>
  );
}
